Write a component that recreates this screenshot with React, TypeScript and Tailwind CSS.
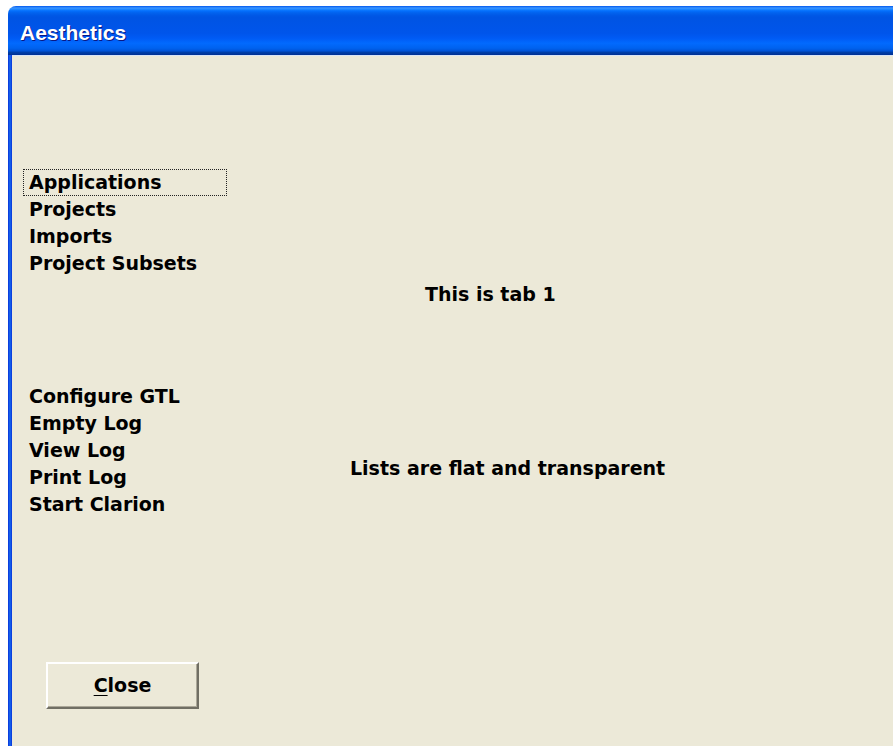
const firstList = ["Applications", "Projects", "Imports", "Project Subsets"];
const secondList = ["Configure GTL", "Empty Log", "View Log", "Print Log", "Start Clarion"];

const uiFont = { fontFamily: '"DejaVu Sans", Verdana, sans-serif' };

function FlatList({ items, focused }: { items: string[]; focused?: number }) {
  return (
    <ul className="w-[204px]">
      {items.map((item, i) => (
        <li
          key={item}
          className={
            "h-[27px] pl-[5px] text-[19px] font-bold leading-[25px] text-black " +
            (i === focused ? "border border-dotted border-[#222]" : "border border-transparent")
          }
        >
          {item}
        </li>
      ))}
    </ul>
  );
}

export default function App() {
  return (
    <div className="min-h-[746px] bg-white pl-[8px] pt-[6px]" style={uiFont}>
      <div className="flex h-[740px] flex-col overflow-hidden rounded-tl-[8px]">
        {/* caption bar */}
        <div className="flex h-[49px] shrink-0 items-center bg-[linear-gradient(180deg,#0058EE_0%,#3A93FF_4%,#288EFF_6%,#127DFF_8%,#036FFC_10%,#0262EE_14%,#0057E5_20%,#0054E3_24%,#0055EB_56%,#005BF5_66%,#026AFE_76%,#0062EF_86%,#0052D6_92%,#0040AB_94%,#003092_100%)] pl-[12px] pt-[4px]">
          <span
            className="text-[21px] font-bold text-white [text-shadow:1px_1px_#0A1883]"
            style={{ fontFamily: '"Liberation Sans", Arial, sans-serif' }}
          >
            Aesthetics
          </span>
        </div>

        <div className="flex flex-1">
          <div className="w-[4px] bg-[linear-gradient(90deg,#0831D9,#166AEE_50%,#0831D9)]" />
          <div className="flex flex-1 border-t border-[#d8e4f8] bg-[#ECE9D8]">
            {/* left column: lists and button */}
            <div className="flex w-[338px] flex-col pl-[11px] pt-[113px]">
              <FlatList items={firstList} focused={0} />
              <div className="h-[106px]" />
              <FlatList items={secondList} />
              <button
                type="button"
                className="mt-[144px] ml-[23px] h-[47px] w-[153px] border-2 border-t-white border-l-white border-b-[#716F64] border-r-[#716F64] bg-[#ECE9D8] text-[19px] font-bold text-black shadow-[inset_-1px_-1px_#ACA899]"
              >
                <span className="underline underline-offset-[3px]">C</span>lose
              </button>
            </div>

            {/* right column: prompts */}
            <div className="flex flex-col pt-[225px] text-[19px] font-bold leading-[27px] text-black">
              <p className="ml-[75px]">This is tab 1</p>
              <p className="mt-[147px]">Lists are flat and transparent</p>
            </div>
          </div>
        </div>
      </div>
    </div>
  );
}
